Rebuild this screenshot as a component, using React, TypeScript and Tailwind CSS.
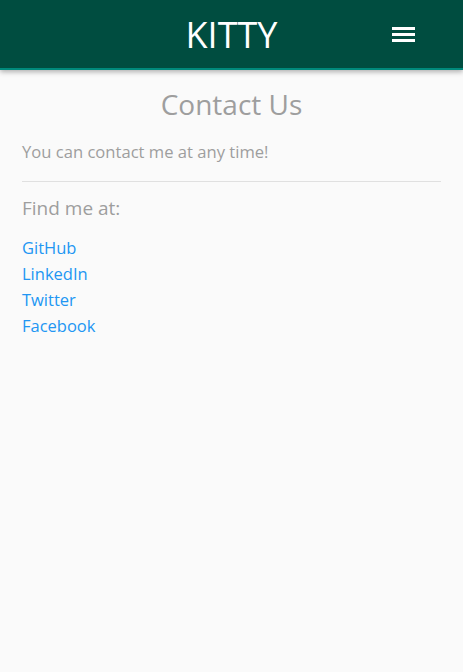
import React from "react"

const links = ["GitHub", "LinkedIn", "Twitter", "Facebook"]

export default function App() {
	return (
		<div className="min-h-[672px] bg-[#fafafa] font-['Open_Sans',sans-serif]">
			<header className="relative h-[70px] bg-[#004d40] border-b-2 border-b-[#00897b] shadow-[0_2px_5px_rgba(0,0,0,0.3)] flex items-center justify-center">
				<h1 className="text-[36px] text-white leading-none mt-[2px]">
					KITTY
				</h1>
				<button className="absolute right-[48px] top-[27px] flex flex-col gap-[3px]">
					<span className="block w-[23px] h-[3px] bg-white" />
					<span className="block w-[23px] h-[3px] bg-white" />
					<span className="block w-[23px] h-[3px] bg-white" />
				</button>
			</header>
			<main className="px-[22px] pt-[16px]">
				<h2 className="text-center text-[28px] text-[#9e9e9e] leading-[36px]">
					Contact Us
				</h2>
				<p className="mt-[18px] text-[16.6px] text-[#9e9e9e] leading-[24px]">
					You can contact me at any time!
				</p>
				<hr className="mt-[17px] border-t border-[#e0e0e0]" />
				<h3 className="mt-[13px] text-[19px] text-[#9e9e9e] leading-[26px]">
					Find me at:
				</h3>
				<ul className="mt-[14px] flex flex-col">
					{links.map((l) => (
						<li key={l}>
							<a href="#" className="text-[16.5px] leading-[26px] text-[#2196f3]">
								{l}
							</a>
						</li>
					))}
				</ul>
			</main>
		</div>
	)
}
